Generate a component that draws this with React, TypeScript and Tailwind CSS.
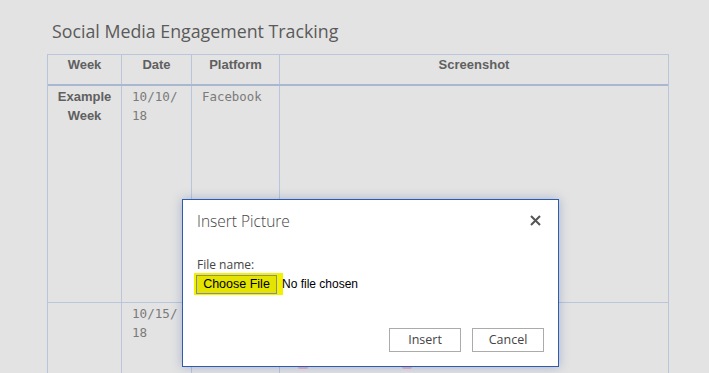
import React from "react";

export default function App() {
  const mono = { fontFamily: '"DejaVu Sans Mono", "Liberation Mono", monospace' } as React.CSSProperties;
  const open = { fontFamily: '"Open Sans", "Liberation Sans", sans-serif' } as React.CSSProperties;
  return (
    <div className="relative h-[373px] w-[709px] overflow-hidden bg-[#e3e3e3]" style={{ fontFamily: '"Liberation Sans", Arial, sans-serif' }}>
      <div className="pl-[47px] pt-[19px]">
        <h1 className="ml-[5px] text-[17.8px] leading-[24px] text-[#5a5a5a]" style={open}>
          Social Media Engagement Tracking
        </h1>
        <div className="mt-[11px] w-[622px] border-l border-r border-t border-[#b9c5da]">
          {/* header */}
          <div className="flex h-[31px] border-b-2 border-[#aab7d1] text-[13px] font-bold leading-[20px] text-[#606060]">
            <div className="flex w-[73px] justify-center">Week</div>
            <div className="flex w-[70px] justify-center border-l border-[#b9c5da]">Date</div>
            <div className="flex w-[88px] justify-center border-l border-[#b9c5da]">Platform</div>
            <div className="flex flex-1 justify-center border-l border-[#b9c5da]">Screenshot</div>
          </div>
          {/* row 1 */}
          <div className="flex h-[217px] border-b border-[#b9c5da]">
            <div className="w-[73px] pt-[1px] text-center text-[13px] font-bold leading-[19px] text-[#606060]">
              Example
              <br />
              Week
            </div>
            <div className="w-[70px] border-l border-[#b9c5da] pl-[10px] pt-[1px] text-[12.6px] leading-[19px] text-[#7a7a7a]" style={mono}>
              10/10/
              <br />
              18
            </div>
            <div className="w-[88px] border-l border-[#b9c5da] pl-[10px] pt-[1px] text-[12.4px] leading-[19px] text-[#7a7a7a]" style={mono}>
              Facebook
            </div>
            <div className="flex-1 border-l border-[#b9c5da]"></div>
          </div>
          {/* row 2 */}
          <div className="flex h-[120px]">
            <div className="w-[73px]"></div>
            <div className="w-[70px] border-l border-[#b9c5da] pl-[10px] pt-[1px] text-[12.6px] leading-[19px] text-[#7a7a7a]" style={mono}>
              10/15/
              <br />
              18
            </div>
            <div className="w-[88px] border-l border-[#b9c5da]"></div>
            <div className="relative flex-1 border-l border-[#b9c5da]">
              <div className="absolute left-[18px] top-[63px] h-[3px] w-[10px] rounded-full bg-[#eab3bd]"></div>
              <div className="absolute left-[122px] top-[62px] h-[4px] w-[10px] rounded-full bg-[#eab3bd]"></div>
            </div>
          </div>
        </div>
      </div>

      {/* dialog */}
      <div className="absolute left-[182px] top-[199px] h-[168px] w-[377px] border border-[#2b5cb0] bg-white shadow-[0_0_10px_rgba(60,90,160,0.35)]">
        <div className="flex items-center justify-between pl-[14px] pr-[17px] pt-[10px]">
          <span className="text-[15.5px] leading-[22px] text-[#444]" style={{ ...open, fontWeight: 300 }}>
            Insert Picture
          </span>
          <svg width="11" height="11" viewBox="0 0 11 11" className="mt-[-2px]">
            <path d="M1 1 L10 10 M10 1 L1 10" stroke="#555" strokeWidth="2" />
          </svg>
        </div>
        <div className="mt-[25px] pl-[14px] text-[12px] leading-[16px] text-[#444]" style={open}>
          File name:
        </div>
        <div className="ml-[11px] mt-[0px] flex items-center">
          <div className="flex h-[22px] w-[89px] items-center bg-[#f2f200] pl-[2px]">
            <div className="flex h-[19px] w-[81px] items-center justify-center border border-[#8c8c8c] bg-[#e4e400] text-[12.5px] text-black">
              Choose File
            </div>
          </div>
          <span className="ml-[-1px] text-[12px] text-black">
            No file chosen
          </span>
        </div>
        <div className="mt-[33px] flex justify-end gap-[11px] pr-[14px]">
          <div className="flex h-[24px] w-[72px] items-center justify-center border border-[#ababab] text-[12.5px] text-[#444]" style={open}>
            Insert
          </div>
          <div className="flex h-[24px] w-[72px] items-center justify-center border border-[#ababab] text-[12.5px] text-[#444]" style={open}>
            Cancel
          </div>
        </div>
      </div>
    </div>
  );
}
